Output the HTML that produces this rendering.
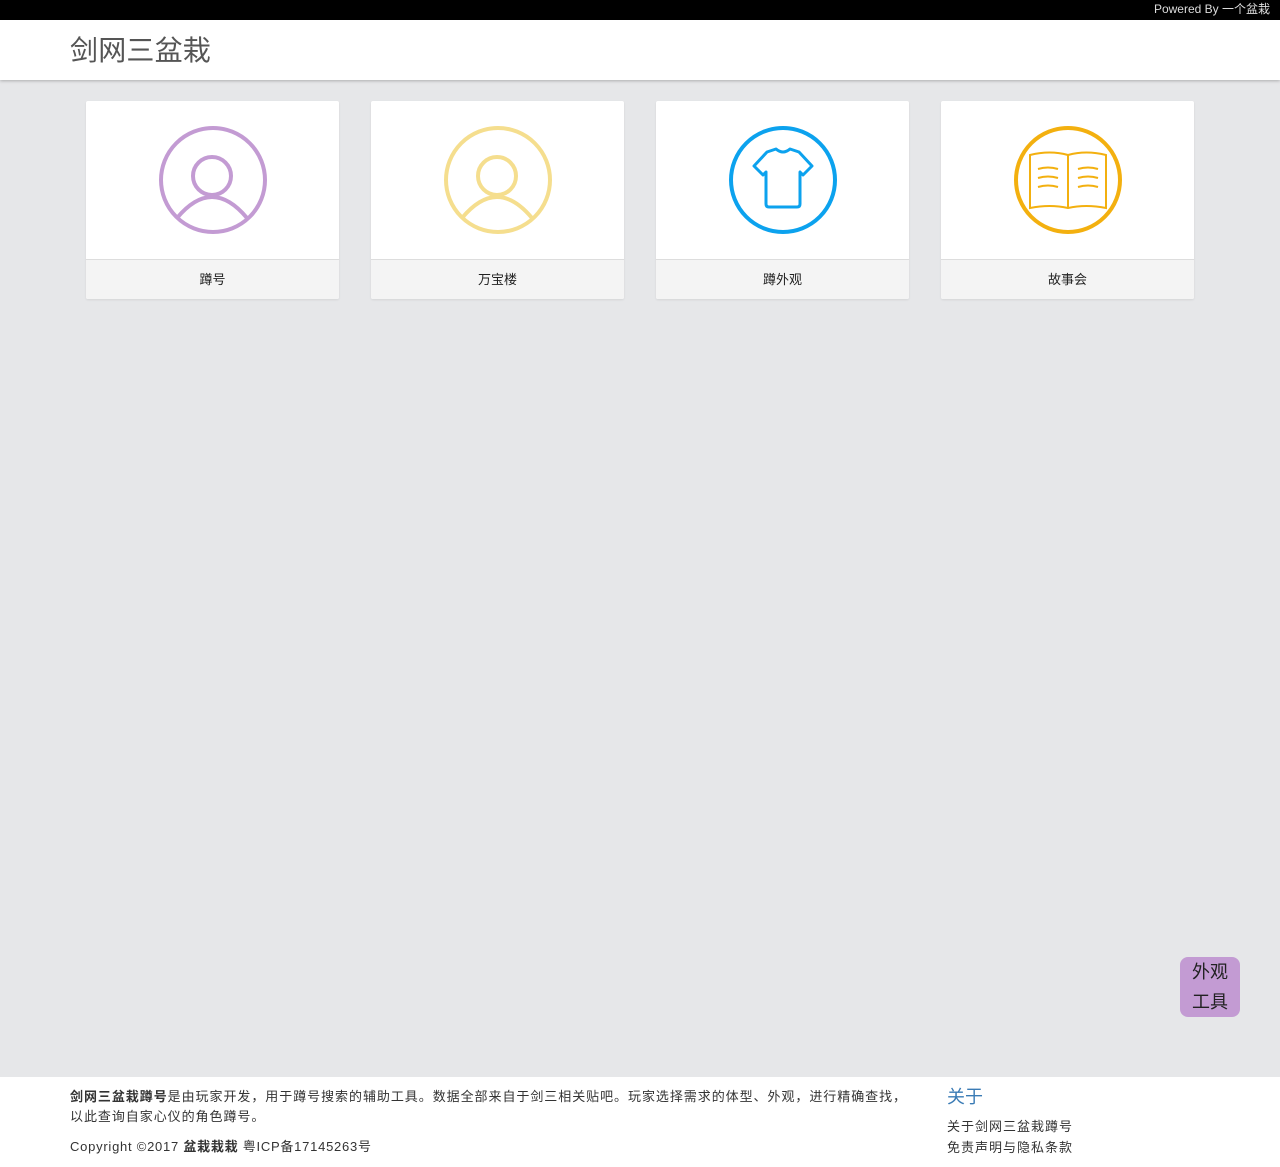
<!DOCTYPE html>
<html><head><meta charset="utf-8"><style>
*{margin:0;padding:0;box-sizing:border-box}
body{width:1280px;height:1167px;background:#e6e7e9;font-family:"Liberation Sans","Noto Sans CJK SC",sans-serif;position:relative;overflow:hidden}
.top{position:absolute;left:0;top:0;width:1280px;height:20px;background:#000;color:#ddd;font-size:12px;text-align:right;padding-right:10px;line-height:19px}
.hdr{position:absolute;left:0;top:20px;width:1280px;height:60px;background:#fff;box-shadow:0 1px 3px rgba(0,0,0,.25)}
.hdr h1{position:absolute;left:70px;top:14px;font-size:28px;font-weight:normal;color:#555;line-height:34px;letter-spacing:.2px}
.card{position:absolute;top:101px;width:253px;height:198px;background:#fff;border-radius:2px;box-shadow:0 1px 2px rgba(0,0,0,.08);overflow:hidden}
.card svg{position:absolute;left:71px;top:23px}
.card .lb{position:absolute;left:0;top:158px;width:100%;height:40px;background:#f4f4f4;border-top:1px solid #ddd;text-align:center;font-size:13px;line-height:40px;color:#222}
.ft{position:absolute;left:0;top:1077px;width:1280px;height:90px;background:#fff;font-size:13px;color:#333}
.float{position:absolute;left:1180px;top:957px;width:60px;height:60px;background:#c39bd3;border-radius:8px;color:#222;font-size:18px;text-align:center;line-height:30px}
</style></head><body>
<div class="top">Powered By 一个盆栽</div>
<div class="hdr"><h1>剑网三盆栽</h1></div>

<div class="card" style="left:86px"><svg width="112" height="112" viewBox="0 0 112 112" fill="none" stroke="#c39bd3" stroke-width="4"><circle cx="56" cy="56" r="52"/><circle cx="55" cy="52" r="19"/><path d="M20 94 Q55 52 90 94"/></svg><div class="lb">蹲号</div></div>
<div class="card" style="left:371px"><svg width="112" height="112" viewBox="0 0 112 112" fill="none" stroke="#f5de8e" stroke-width="4"><circle cx="56" cy="56" r="52"/><circle cx="55" cy="52" r="19"/><path d="M20 94 Q55 52 90 94"/></svg><div class="lb">万宝楼</div></div>
<div class="card" style="left:656px"><svg width="112" height="112" viewBox="0 0 112 112" fill="none" stroke="#0ca2ee" stroke-width="4"><circle cx="56" cy="56" r="52"/><path stroke-width="3" stroke-linejoin="round" d="M40 28 L49 25 Q56 31 63 25 L72 28 L85 42 L76 51 L73 48 L73 80 Q73 83 70 83 L42 83 Q39 83 39 80 L39 48 L36 51 L27 42 Z"/></svg><div class="lb">蹲外观</div></div>
<div class="card" style="left:941px"><svg width="112" height="112" viewBox="0 0 112 112" fill="none" stroke="#f3b00f" stroke-width="4"><circle cx="56" cy="56" r="52"/><g stroke-width="2"><path d="M18 31 Q38 26 56 31 Q74 26 94 31 L94 84 Q74 80 56 84 Q38 80 18 84 Z"/><path d="M56 31 V84"/><path d="M26 45 Q36 42 46 45 M26 54 Q36 51 46 54 M26 63 Q36 60 46 63 M66 45 Q76 42 86 45 M66 54 Q76 51 86 54 M66 63 Q76 60 86 63"/></g></svg><div class="lb">故事会</div></div>

<div class="float">外观<br>工具</div>

<div class="ft">
<div style="position:absolute;left:70px;top:10px;width:870px;line-height:20px;white-space:nowrap;letter-spacing:.95px"><b>剑网三盆栽蹲号</b>是由玩家开发，用于蹲号搜索的辅助工具。数据全部来自于剑三相关贴吧。玩家选择需求的体型、外观，进行精确查找，<br>以此查询自家心仪的角色蹲号。</div>
<div style="position:absolute;left:70px;top:60px;line-height:20px;letter-spacing:.75px">Copyright ©2017 <b>盆栽栽栽</b> 粤ICP备17145263号</div>
<div style="position:absolute;left:947px;top:8px;font-size:18px;color:#3a7bb5;line-height:24px">关于</div>
<div style="position:absolute;left:947px;top:39px;line-height:21px;letter-spacing:1px">关于剑网三盆栽蹲号<br>免责声明与隐私条款</div>
</div>
</body></html>
